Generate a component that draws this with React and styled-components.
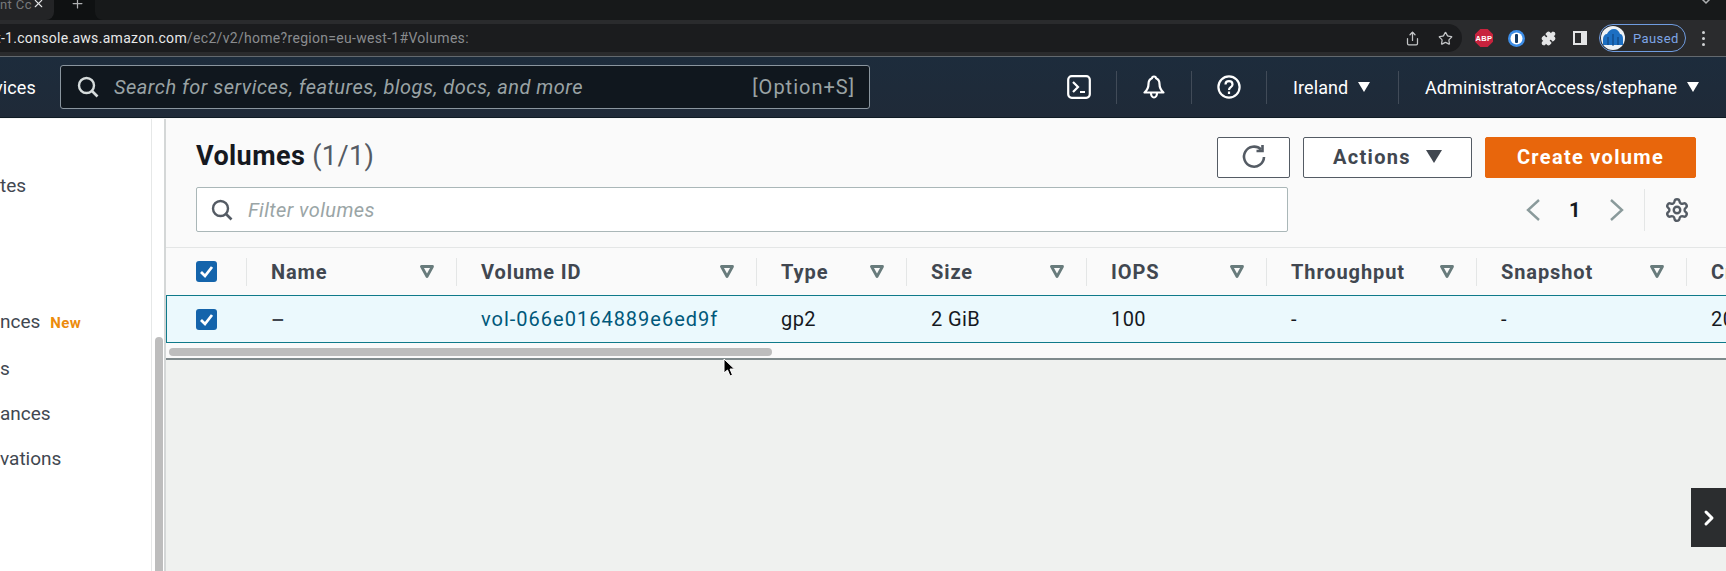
import React from 'react'
import styled, { createGlobalStyle } from 'styled-components'
import { Settings, Star, Share, Puzzle, ChevronRight, Plus, X } from 'lucide-react'

const Global = createGlobalStyle`
  html, body { margin: 0; padding: 0; background: #eff1ef; }
  * { box-sizing: border-box; }
  body { font-family: "Roboto", "Noto Sans", sans-serif; letter-spacing: 0.4px; }
`

const Page = styled.div`
  position: relative;
  width: 1726px;
  height: 571px;
  overflow: hidden;
  display: flex;
  flex-direction: column;
`

/* browser chrome */
const TabStrip = styled.div`
  height: 20px;
  background: #0f1112;
  display: flex;
  align-items: flex-start;
  color: #b9bbbd;
  font-size: 13px;
`
const Tab = styled.div`
  width: 54px;
  height: 20px;
  background: #232426;
  border-bottom-right-radius: 8px;
  display: flex;
  align-items: flex-start;
  justify-content: space-between;
  padding-right: 10px;
  line-height: 10px;
  overflow: hidden;
  white-space: nowrap;
  color: #77797b;
  svg { color: #e4e5e6; margin-top: -3px; flex: none; }
`
const NewTab = styled.div`
  margin-left: 16px;
  color: #aeb0b2;
  display: flex;
  svg { margin-top: -4px; }
`
const StripFill = styled.div`
  flex: 1;
  height: 20px;
  margin-left: 10px;
  background: #17191a;
  border-bottom-left-radius: 8px;
  display: flex;
  justify-content: flex-end;
  padding-right: 14px;
  svg { margin-top: -3px; color: #aeb0b2; }
`
const Toolbar = styled.div`
  height: 37px;
  background: #2a2b2d;
  display: flex;
  align-items: center;
  border-bottom: 1px solid #63696e;
`
const AddressBar = styled.div`
  width: 1462px;
  height: 28px;
  background: #1b1c1e;
  border-radius: 0 14px 14px 0;
  display: flex;
  align-items: center;
  justify-content: space-between;
  padding-right: 9px;
  font-size: 14px;
  color: #8a8c8f;
  letter-spacing: 0.3px;
  white-space: nowrap;
`
const AddressText = styled.span`
  margin-left: -4px;
`
const Host = styled.span`
  color: #e8e9ea;
`
const BarIcons = styled.div`
  display: flex;
  align-items: center;
  gap: 18px;
  color: #c4c6c8;
`
const Extensions = styled.div`
  display: flex;
  align-items: center;
  flex: 1;
  padding-left: 6px;
`
const ExtSlot = styled.div`
  width: 32px;
  display: flex;
  justify-content: center;
  align-items: center;
`
const Profile = styled.div`
  width: 87px;
  height: 28px;
  margin-left: 3px;
  border: 1px solid #6f9ce0;
  border-radius: 14px;
  display: flex;
  align-items: center;
  gap: 8px;
  padding-left: 1px;
  color: #7ea6e6;
  font-size: 13px;
`
const Kebab = styled.div`
  margin-left: 16px;
  display: flex;
  flex-direction: column;
  gap: 3px;
  span { width: 3px; height: 3px; border-radius: 50%; background: #d0d2d4; }
`

/* aws nav */
const Nav = styled.div`
  height: 61px;
  background: linear-gradient(#1d2c3c, #1f2a38);
  display: flex;
  align-items: center;
  color: #fff;
  font-size: 18px;
  letter-spacing: 0.1px;
  border-bottom: 1px solid #0f1b24;
`
const ServicesLabel = styled.div`
  width: 60px;
  margin-left: -6px;
  flex: none;
  margin-right: 6px;
`
const SearchBox = styled.div`
  width: 810px;
  height: 44px;
  background: #10171e;
  border: 1px solid #8a959e;
  border-radius: 3px;
  display: flex;
  align-items: center;
  padding: 0 14px 0 16px;
  color: #9aa3a5;
  font-size: 20px;
  letter-spacing: 0.5px;
`
const SearchHint = styled.span`
  font-style: italic;
  margin-left: 15px;
  flex: 1;
`
const ShortcutHint = styled.span`
  letter-spacing: 1px;
`
const NavIcon = styled.div`
  width: 75px;
  height: 33px;
  display: flex;
  align-items: center;
  justify-content: center;
  border-right: 1px solid #414b58;
`
const NavIcons = styled.div`
  margin-left: 172px;
  display: flex;
`
const NavMenu = styled.div`
  height: 33px;
  display: flex;
  align-items: center;
  gap: 10px;
  padding-left: ${p => p.$pad}px;
  width: ${p => p.$width}px;
  flex: none;
  white-space: nowrap;
  border-right: ${p => (p.$divider ? '1px solid #414b58' : 'none')};
`
const Caret = styled.span`
  width: 0;
  height: 0;
  border-left: ${p => (p.$big ? 8 : 6)}px solid transparent;
  border-right: ${p => (p.$big ? 8 : 6)}px solid transparent;
  border-top: ${p => (p.$big ? 13 : 10)}px solid ${p => p.$color || '#fff'};
  flex: none;
`

/* page body */
const Body = styled.div`
  flex: 1;
  display: flex;
  min-height: 0;
  border-top: 1px solid #f5f6f6;
`
const Sidebar = styled.div`
  width: 152px;
  flex: none;
  background: #fff;
  border-right: 1px solid #e6e8e8;
  padding-top: 44px;
  color: #414750;
  font-size: 19px;
  letter-spacing: 0;
`
const SideItem = styled.div`
  height: 45px;
  line-height: 45px;
  margin-top: ${p => p.$gap || 0}px;
  white-space: nowrap;
`
const NewBadge = styled.span`
  margin-left: 10px;
  color: #ec8b0c;
  font-size: 15px;
  font-weight: 700;
  letter-spacing: 0.4px;
`
const SideScroll = styled.div`
  width: 14px;
  flex: none;
  background: #fff;
  padding: 218px 3px 0;
  border-right: 2px solid #d4d7d7;
`
const SideThumb = styled.div`
  width: 8px;
  height: 100%;
  background: #bdbdbd;
  border-radius: 4px 4px 0 0;
`
const Main = styled.div`
  flex: 1;
  min-width: 0;
  display: flex;
  flex-direction: column;
`
const Panel = styled.div`
  height: 241px;
  flex: none;
  background: #fafafa;
  border-bottom: 2px solid #7f8a8c;
  padding-top: 18px;
`
const TitleRow = styled.div`
  display: flex;
  justify-content: space-between;
  padding: 0 30px 0 30px;
`
const Title = styled.h1`
  margin: 0;
  font-size: 27px;
  line-height: 39px;
  font-weight: 700;
  color: #16191f;
`
const Count = styled.span`
  font-weight: 400;
  color: #545b64;
  margin-left: 7px;
`
const Actions = styled.div`
  display: flex;
  gap: 13px;
`
const Button = styled.div`
  width: ${p => p.$width}px;
  height: 41px;
  display: flex;
  align-items: center;
  justify-content: center;
  gap: 15px;
  padding-bottom: 2px;
  border-radius: 2px;
  font-size: 20px;
  font-weight: 700;
  letter-spacing: 1.3px;
  background: ${p => (p.$primary ? '#e8660c' : '#fff')};
  color: ${p => (p.$primary ? '#fff' : '#414750')};
  border: 1px solid ${p => (p.$primary ? '#e8660c' : '#545b64')};
`
const FilterRow = styled.div`
  display: flex;
  align-items: center;
  padding: 0 30px 0 30px;
  margin-top: 9px;
`
const Filter = styled.div`
  width: 1092px;
  height: 45px;
  background: #fff;
  border: 1px solid #aab7b8;
  border-radius: 2px;
  display: flex;
  align-items: center;
  padding-left: 14px;
  gap: 15px;
  color: #9aa5a6;
  font-style: italic;
  font-size: 20px;
`
const Pager = styled.div`
  margin-left: 238px;
  display: flex;
  align-items: center;
  color: #16191f;
  font-size: 20px;
  font-weight: 700;
`
const PageNum = styled.span`
  width: 68px;
  text-align: center;
`
const PagerGear = styled.div`
  margin-left: 20px;
  border-left: 1px solid #e4e6e6;
  height: 42px;
  width: 47px;
  padding-left: 19px;
  display: flex;
  align-items: center;
  color: #545b64;
`
const Row = styled.div`
  display: grid;
  grid-template-columns: 81px 210px 300px 150px 180px 180px 210px 210px 1fr;
  height: 48px;
  align-items: center;
  font-size: 20px;
  white-space: nowrap;
`
const HeadRow = styled(Row)`
  margin-top: 15px;
  border-top: 1px solid #e4e6e6;
  font-weight: 700;
  letter-spacing: 0.9px;
  color: #414750;
`
const BodyRow = styled(Row)`
  background: #ebf9fd;
  border-top: 1px solid #0f7a8a;
  border-bottom: 1px solid #0f7a8a;
  box-shadow: inset 1px 0 0 #0f7a8a;
  color: #16191f;
`
const Cell = styled.div`
  display: flex;
  align-items: center;
  justify-content: space-between;
  height: ${p => (p.$head ? '28px' : 'auto')};
  padding: 0 22px 0 24px;
  border-right: ${p => (p.$head && !p.$last ? '1px solid #e4e6e6' : 'none')};
`
const CheckCell = styled(Cell)`
  padding: 0 0 0 30px;
`
const VolumeLink = styled.span`
  color: #00587a;
  letter-spacing: 1px;
`
const Dash = styled.span`
  color: #414750;
  font-size: 21px;
  font-weight: 500;
  padding-top: 2px;
`
const HScroll = styled.div`
  height: 14px;
  padding: 5px 0 0 3px;
`
const HThumb = styled.div`
  width: 603px;
  height: 8px;
  background: #bdbdbd;
  border-radius: 4px;
`
const SideToggle = styled.div`
  position: absolute;
  right: 0;
  top: 488px;
  width: 35px;
  height: 59px;
  background: #2b2d2f;
  display: flex;
  align-items: center;
  justify-content: center;
  color: #fff;
`
const Cursor = styled.svg`
  position: absolute;
  left: 722px;
  top: 358px;
`

const FilterIcon = () => (
  <svg width="14" height="13" viewBox="0 0 14 13" fill="none">
    <path d="M1.5 1.5h11L7 11.5z" stroke="#687b7c" strokeWidth="2.8" strokeLinejoin="round" />
  </svg>
)

const Check = () => (
  <svg width="21" height="21" viewBox="0 0 21 21">
    <rect width="21" height="21" rx="3" fill="#1464ab" />
    <path d="M5 11l4 4 7-9" fill="none" stroke="#fff" strokeWidth="2.8" />
  </svg>
)

const SearchIcon = ({ color, size = 22 }) => (
  <svg width={size} height={size} viewBox="0 0 22 22" fill="none">
    <circle cx="9.5" cy="9.5" r="7.5" stroke={color} strokeWidth="2.4" />
    <path d="M15 15l5.5 5.5" stroke={color} strokeWidth="2.6" />
  </svg>
)

const TerminalIcon = () => (
  <svg width="24" height="24" viewBox="0 0 24 24" fill="none" stroke="#fff" strokeWidth="2.2">
    <rect x="1.2" y="1.2" width="21.6" height="21.6" rx="3.5" />
    <path d="M6 7l5 5-5 5M13 17h5" />
  </svg>
)

const BellIcon = () => (
  <svg width="24" height="26" viewBox="0 0 24 26" fill="none" stroke="#fff" strokeWidth="2.2">
    <path d="M12 2.5c-1.2 0-2 .8-2 1.8C7.6 5.3 6.5 7.5 6.5 10c0 4-1.6 6.5-4 8.5h19c-2.4-2-4-4.500-4-8.500 0-2.500-1.100-4.700-3.500-5.700 0-1-.8-1.800-2-1.800z" strokeLinejoin="round" />
    <path d="M9 19c0 2.500 1.300 4.500 3 4.500s3-2 3-4.500" />
  </svg>
)

const HelpIcon = () => (
  <svg width="24" height="24" viewBox="0 0 24 24" fill="none" stroke="#fff" strokeWidth="2.2">
    <circle cx="12" cy="12" r="10.6" />
    <path d="M8.500 9.500c0-2 1.500-3.300 3.500-3.300s3.500 1.300 3.500 3.200c0 2.700-3.500 2.800-3.500 5.600" />
    <path d="M12 16.500v2.500" />
  </svg>
)

const RefreshIcon = () => (
  <svg width="26" height="26" viewBox="0 0 26 26" fill="none" stroke="#545b64" strokeWidth="2.6">
    <path d="M20 5.500A10 10 0 1 0 23 13" />
    <path d="M21.500 1v6h-6" />
  </svg>
)

const PagerArrow = ({ flip }) => (
  <svg width="15" height="24" viewBox="0 0 15 24" fill="none" stroke="#8a9a9b" strokeWidth="2.4">
    <path d={flip ? 'M2 2l11 10L2 22' : 'M13 2L2 12l11 10'} />
  </svg>
)

const AbpIcon = () => (
  <svg width="18" height="18" viewBox="0 0 18 18">
    <path d="M5.300 0h7.400L18 5.300v7.400L12.700 18H5.300L0 12.700V5.300z" fill="#c8233d" />
    <text x="9" y="12" textAnchor="middle" fontSize="7.500" fontWeight="700" fill="#fff" fontFamily="Liberation Sans">ABP</text>
  </svg>
)

const OnePassIcon = () => (
  <svg width="17" height="17" viewBox="0 0 17 17">
    <circle cx="8.500" cy="8.500" r="8.500" fill="#3d8ee8" />
    <circle cx="8.500" cy="8.500" r="6" fill="#fff" />
    <rect x="7" y="4" width="3" height="9" rx="1" fill="#123a66" />
  </svg>
)

const SidePanelIcon = () => (
  <svg width="14" height="14" viewBox="0 0 14 14">
    <rect x="1" y="1" width="12" height="12" fill="none" stroke="#e4e5e6" strokeWidth="2" />
    <rect x="8" y="1" width="5" height="12" fill="#e4e5e6" />
  </svg>
)

const Avatar = () => (
  <svg width="24" height="24" viewBox="0 0 24 24">
    <circle cx="12" cy="12" r="12" fill="#eef2f6" />
    <path d="M2 19v-6c0-3 2-5 4-5 1-3 4-5 7-5 3 0 5 2 6 5 2 0 3 2 3 5v6z" fill="#1d6fc2" />
    <path d="M12 8v12M7 11v8M17 11v8" stroke="#0f3f75" strokeWidth="1" />
  </svg>
)

const columns = [
  { name: 'Name', value: <Dash>–</Dash> },
  { name: 'Volume ID', value: <VolumeLink>vol-066e0164889e6ed9f</VolumeLink> },
  { name: 'Type', value: 'gp2' },
  { name: 'Size', value: '2 GiB' },
  { name: 'IOPS', value: '100' },
  { name: 'Throughput', value: '-' },
  { name: 'Snapshot', value: '-' },
]

export default function App() {
  return (
    <Page>
      <Global />
      <TabStrip>
        <Tab>
          <span>nt Cc</span>
          <X size={13} strokeWidth={2} />
        </Tab>
        <NewTab><Plus size={15} strokeWidth={2} /></NewTab>
        <StripFill>
          <svg width="12" height="8" viewBox="0 0 12 8" fill="none" stroke="currentColor" strokeWidth="1.5">
            <path d="M1 1l5 5 5-5" />
          </svg>
        </StripFill>
      </TabStrip>
      <Toolbar>
        <AddressBar>
          <AddressText><Host>t-1.console.aws.amazon.com</Host>/ec2/v2/home?region=eu-west-1#Volumes:</AddressText>
          <BarIcons>
            <Share size={15} />
            <Star size={15} />
          </BarIcons>
        </AddressBar>
        <Extensions>
          <ExtSlot><AbpIcon /></ExtSlot>
          <ExtSlot><OnePassIcon /></ExtSlot>
          <ExtSlot><Puzzle size={15} fill="#e4e5e6" color="#e4e5e6" /></ExtSlot>
          <ExtSlot><SidePanelIcon /></ExtSlot>
          <Profile>
            <Avatar />
            Paused
          </Profile>
          <Kebab><span /><span /><span /></Kebab>
        </Extensions>
      </Toolbar>
      <Nav>
        <ServicesLabel>vices</ServicesLabel>
        <SearchBox>
          <SearchIcon color="#d5dbdb" />
          <SearchHint>Search for services, features, blogs, docs, and more</SearchHint>
          <ShortcutHint>[Option+S]</ShortcutHint>
        </SearchBox>
        <NavIcons>
          <NavIcon><TerminalIcon /></NavIcon>
          <NavIcon><BellIcon /></NavIcon>
          <NavIcon><HelpIcon /></NavIcon>
        </NavIcons>
        <NavMenu $pad={26} $width={132} $divider>
          Ireland <Caret />
        </NavMenu>
        <NavMenu $pad={26} $width={326}>
          AdministratorAccess/stephane <Caret />
        </NavMenu>
      </Nav>
      <Body>
        <Sidebar>
          <SideItem>tes</SideItem>
          <SideItem $gap={91}>nces<NewBadge>New</NewBadge></SideItem>
          <SideItem $gap={2}>s</SideItem>
          <SideItem>ances</SideItem>
          <SideItem>vations</SideItem>
        </Sidebar>
        <SideScroll><SideThumb /></SideScroll>
        <Main>
          <Panel>
            <TitleRow>
              <Title>Volumes<Count>(1/1)</Count></Title>
              <Actions>
                <Button $width={73}><RefreshIcon /></Button>
                <Button $width={169}>Actions <Caret $big $color="#414750" /></Button>
                <Button $width={211} $primary>Create volume</Button>
              </Actions>
            </TitleRow>
            <FilterRow>
              <Filter>
                <SearchIcon color="#545b64" />
                Filter volumes
              </Filter>
              <Pager>
                <PagerArrow />
                <PageNum>1</PageNum>
                <PagerArrow flip />
                <PagerGear><Settings size={26} strokeWidth={2.2} /></PagerGear>
              </Pager>
            </FilterRow>
            <HeadRow>
              <CheckCell $head><Check /></CheckCell>
              {columns.map(c => (
                <Cell $head key={c.name}>{c.name}<FilterIcon /></Cell>
              ))}
              <Cell $head $last>Cr</Cell>
            </HeadRow>
            <BodyRow>
              <CheckCell><Check /></CheckCell>
              {columns.map(c => (
                <Cell key={c.name}>{c.value}</Cell>
              ))}
              <Cell>20</Cell>
            </BodyRow>
            <HScroll><HThumb /></HScroll>
          </Panel>
        </Main>
      </Body>
      <SideToggle>
        <ChevronRight size={24} strokeWidth={3} />
      </SideToggle>
      <Cursor width="14" height="20" viewBox="0 0 14 20">
        <path d="M2 1v14l3.500-3 2.500 6 2.500-1-2.500-6h4.500z" fill="#000" stroke="#fff" strokeWidth="1" />
      </Cursor>
    </Page>
  )
}
